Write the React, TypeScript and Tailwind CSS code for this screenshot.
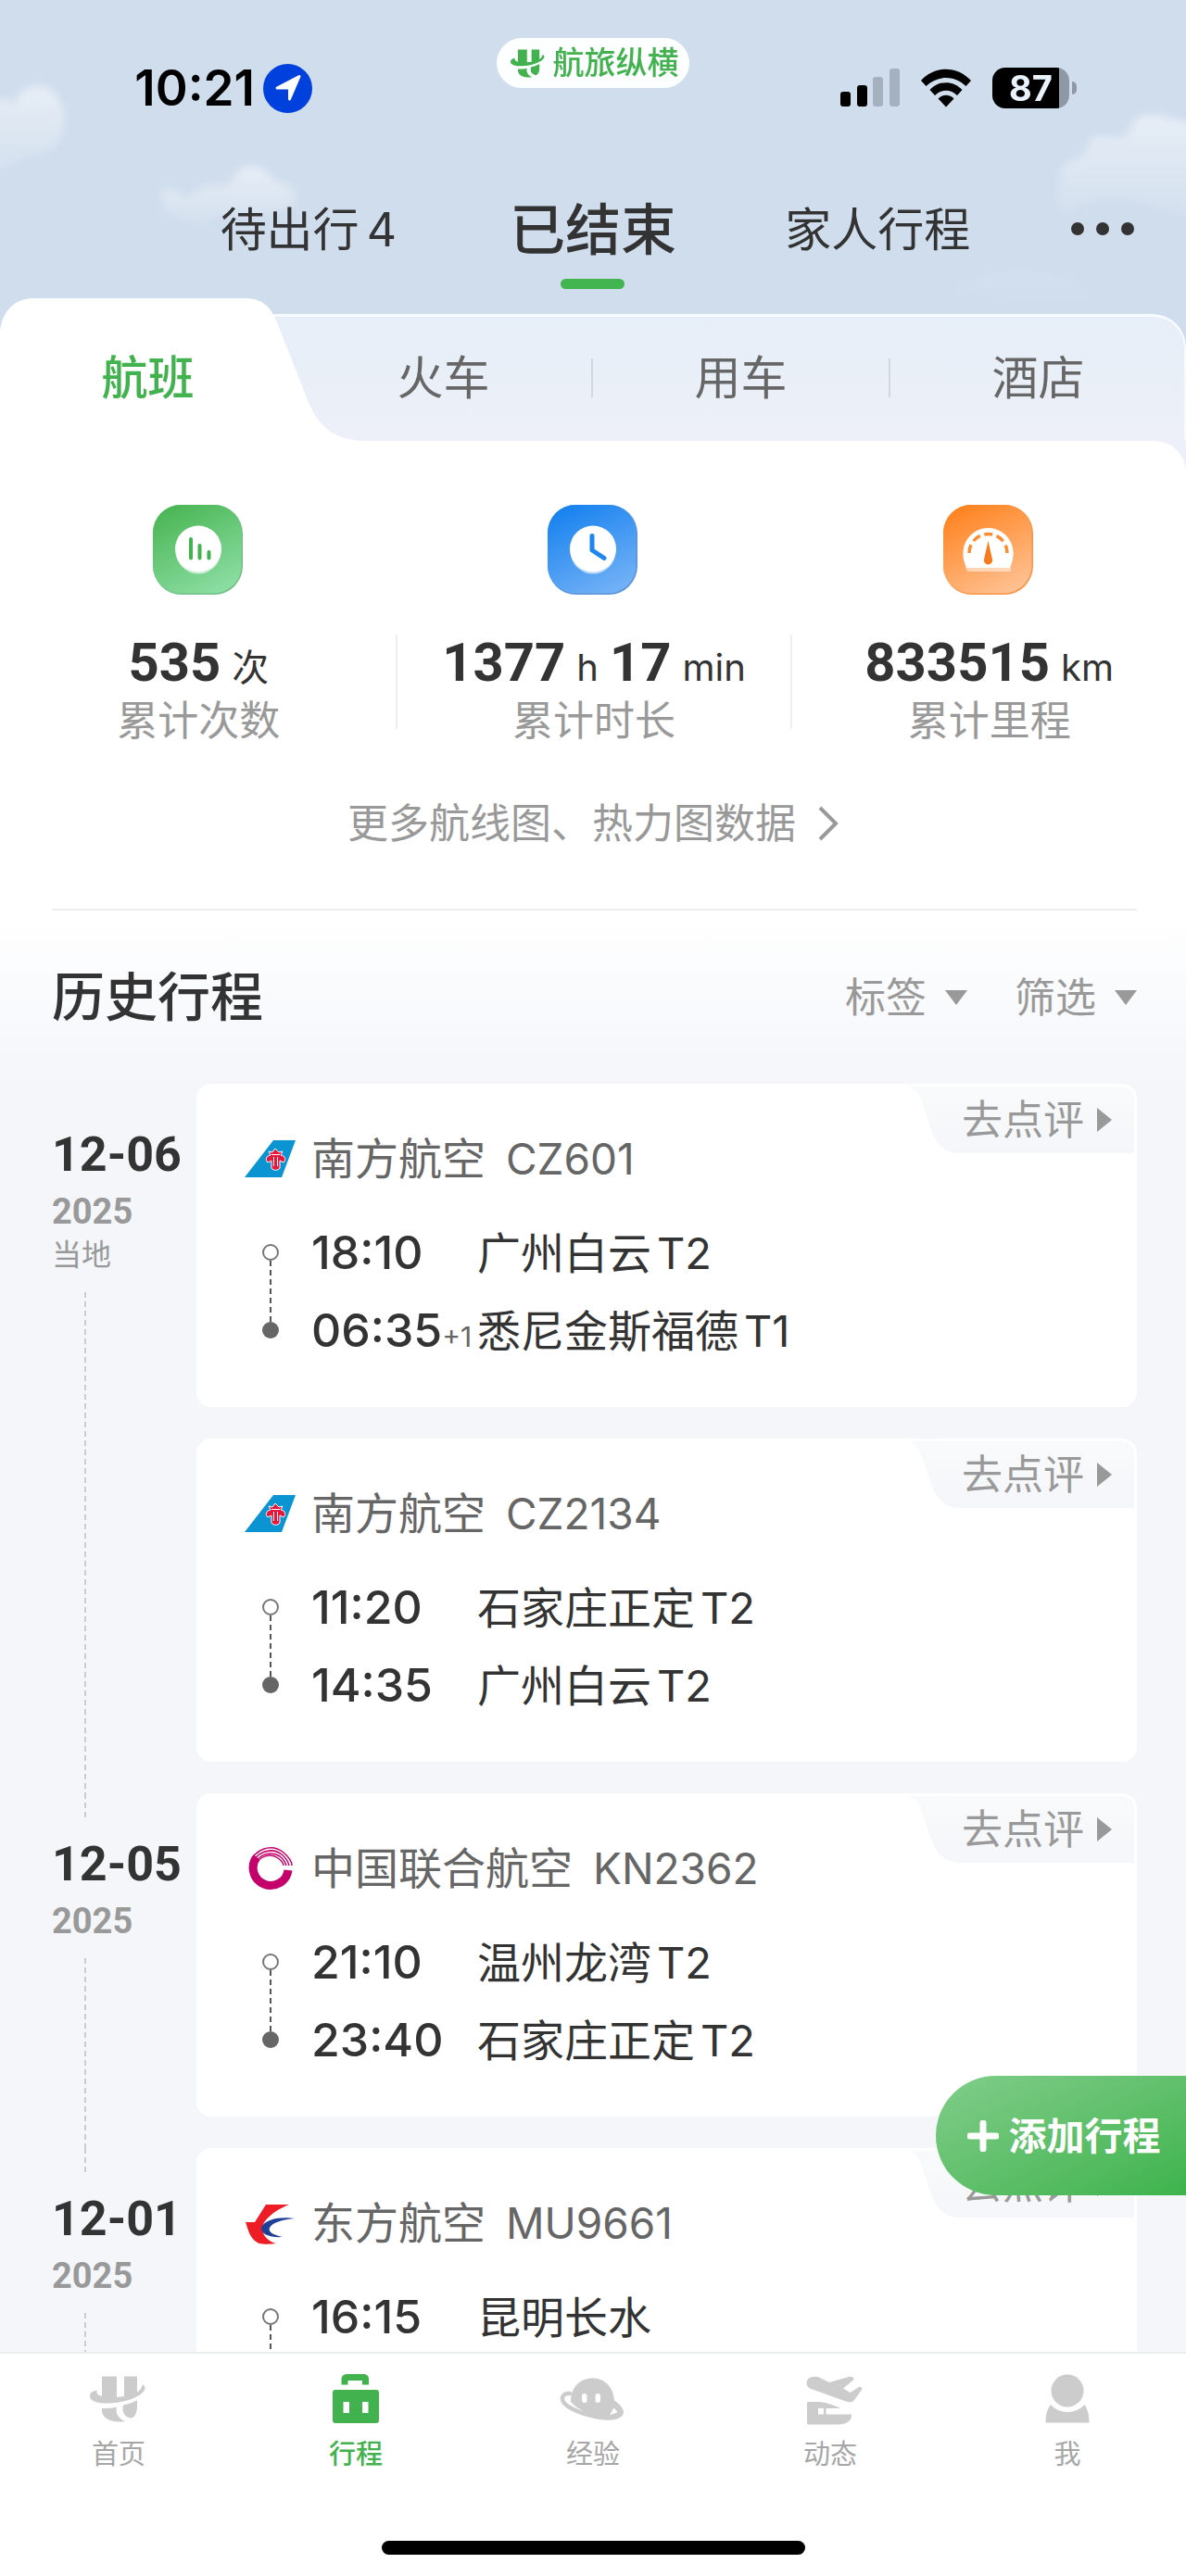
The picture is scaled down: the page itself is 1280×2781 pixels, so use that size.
import { Fragment } from 'react';
import type { ReactNode } from 'react';

type Airline = 'southern' | 'united' | 'eastern';

interface Stop {
  time: string;
  place: string;
  terminal?: string;
  /** Day offset shown after the arrival time, e.g. "+1". */
  dayOffset?: string;
}

interface Flight {
  airline: Airline;
  airlineName: string;
  flightNo: string;
  departure: Stop;
  arrival?: Stop;
}

interface DayGroup {
  date: string;
  year: string;
  note?: string;
  flights: Flight[];
}

const DAY_GROUPS: DayGroup[] = [
  {
    date: '12-06',
    year: '2025',
    note: '当地',
    flights: [
      {
        airline: 'southern',
        airlineName: '南方航空',
        flightNo: 'CZ601',
        departure: { time: '18:10', place: '广州白云', terminal: 'T2' },
        arrival: { time: '06:35', place: '悉尼金斯福德', terminal: 'T1', dayOffset: '+1' },
      },
      {
        airline: 'southern',
        airlineName: '南方航空',
        flightNo: 'CZ2134',
        departure: { time: '11:20', place: '石家庄正定', terminal: 'T2' },
        arrival: { time: '14:35', place: '广州白云', terminal: 'T2' },
      },
    ],
  },
  {
    date: '12-05',
    year: '2025',
    flights: [
      {
        airline: 'united',
        airlineName: '中国联合航空',
        flightNo: 'KN2362',
        departure: { time: '21:10', place: '温州龙湾', terminal: 'T2' },
        arrival: { time: '23:40', place: '石家庄正定', terminal: 'T2' },
      },
    ],
  },
  {
    date: '12-01',
    year: '2025',
    flights: [
      {
        airline: 'eastern',
        airlineName: '东方航空',
        flightNo: 'MU9661',
        departure: { time: '16:15', place: '昆明长水' },
      },
    ],
  },
];

const TRIP_TABS = [
  { label: '待出行', count: 4, active: false },
  { label: '已结束', active: true },
  { label: '家人行程', active: false },
];

const OTHER_MODES = ['火车', '用车', '酒店'];

/** Brand mark, used both in the status bar pill and in the bottom bar. */
function BrandMark({ className }: { className: string }): React.JSX.Element {
  return (
    <svg viewBox="0 0 72 60" fill="currentColor" className={className} aria-hidden="true">
      <path d="M18 5.5H34V28L42 27V5.5H56V22.5C59 20.5 61 18 61.5 14.5C66 16 66 21 58 26C48 32 34 35 20 34.5C10 34 5 31 5 27C5 23 8 21 13 20.5C11.5 23 13 26 18 27Z" />
      <path d="M18 40C24 40 30 39.5 34 38.5C32 45 36 51 43 54C30 56 19 52 18 43Z" />
      <path d="M41 36.5C47 35.5 52 33.5 56 31V38C56 45 53 50.5 49 50.5C43 49 39 45 41 36.5Z" />
    </svg>
  );
}

function Clouds(): React.JSX.Element {
  return (
    <svg
      viewBox="0 0 1280 480"
      preserveAspectRatio="xMidYMin slice"
      className="absolute inset-0 h-full w-full"
      aria-hidden="true"
    >
      <defs>
        <filter id="cloud-soft" x="-20%" y="-20%" width="140%" height="140%">
          <feGaussianBlur stdDeviation="4" />
        </filter>
        <linearGradient id="cloud-fade" x1="0" y1="0" x2="0" y2="1">
          <stop offset="0" stopColor="#fff" stopOpacity="0.5" />
          <stop offset="1" stopColor="#fff" stopOpacity="0.1" />
        </linearGradient>
      </defs>
      <g fill="url(#cloud-fade)" filter="url(#cloud-soft)">
        <path d="M-20 112C0 104 12 106 16 112C18 90 56 84 64 108C74 122 72 150 54 162C40 166 14 174 0 184L-20 190Z" />
        <path d="M174 214C170 204 190 198 198 212C210 212 214 200 230 200C246 204 252 194 256 186C268 172 290 180 296 196C312 196 324 208 318 222C290 236 252 230 232 234C220 246 206 246 200 236C186 236 176 226 174 214Z" />
        <path d="M1144 230C1136 208 1148 202 1142 188C1148 172 1166 172 1174 160C1174 140 1196 148 1206 148C1222 150 1218 130 1230 126C1250 118 1270 134 1300 132V232C1260 236 1240 214 1200 214C1170 214 1160 232 1144 230Z" />
        <path d="M1030 316C1070 280 1160 286 1190 330L1100 326Z" opacity="0.2" />
      </g>
    </svg>
  );
}

function StatusBar(): React.JSX.Element {
  return (
    <div className="relative grid h-[190px] grid-cols-[1fr_208px_1fr] items-center">
      <div className="flex items-center justify-end gap-[9px] pr-[199px]">
        <span className="text-[53px] leading-[60px] font-semibold text-black">10:21</span>
        <span className="flex size-[53px] items-center justify-center rounded-full bg-[#0040dd]">
          <svg viewBox="0 0 30 30" className="size-[30px]" aria-hidden="true">
            <path
              d="M27 2.5L16.500 27V15H3Z"
              fill="#fff"
              stroke="#fff"
              strokeWidth="3"
              strokeLinejoin="round"
            />
          </svg>
        </span>
      </div>

      <div className="mt-[41px] flex h-[54px] items-center justify-center gap-[5px] self-start rounded-full bg-[#fcfeff] text-[#42b24e]">
        <BrandMark className="h-[37px] w-[44px]" />
        <span className="text-[34px] leading-[40px] font-medium">航旅纵横</span>
      </div>

      <div className="flex items-center justify-end pr-[118px]">
        <svg viewBox="0 0 64 42" className="h-[42px] w-[64px]" aria-hidden="true">
          <rect x="0" y="25" width="11" height="16" rx="3" />
          <rect x="18" y="18" width="11" height="23" rx="3" />
          <rect x="35" y="9" width="11" height="32" rx="3" fill="#a6b1bf" />
          <rect x="53" y="0" width="11" height="41" rx="3" fill="#a6b1bf" />
        </svg>
        <svg viewBox="0 0 56 42" className="ml-[22px] h-[42px] w-[56px]" aria-hidden="true">
          <path d="M1 13C16 -3.500 40 -3.500 55 13L49.500 19C37 7 19 7 6.500 19Z" />
          <path d="M10.500 23C20 12.500 36 12.500 45.500 23L40 29C33 22 23 22 16 29Z" />
          <path d="M19.500 32.500C24 27.500 32 27.500 36.500 32.500L28 41.500Z" />
        </svg>
        <div className="ml-[22px] flex items-center gap-[3px]">
          <div className="flex h-[44px] w-[83px] items-center justify-center rounded-[14px] bg-[linear-gradient(to_right,#000_87%,#8f99a6_87%)] text-[38px] leading-[44px] font-bold text-[#e9f1fa]">
            87
          </div>
          <div className="h-[14px] w-[5px] rounded-r-full bg-[#8f99a6]" />
        </div>
      </div>
    </div>
  );
}

function TripTabs(): React.JSX.Element {
  return (
    <nav className="relative grid h-[132px] grid-cols-[14fr_24fr_24fr_24fr_14fr]">
      {TRIP_TABS.map((tab) => (
        <button
          key={tab.label}
          type="button"
          className="flex flex-col items-center pt-[22px] text-[#333] first:col-start-2"
        >
          {tab.active ? (
            <>
              <span className="text-[60px] leading-[72px] font-medium">{tab.label}</span>
              <span className="mt-[17px] h-[11px] w-[69px] rounded-full bg-[#42b550]" />
            </>
          ) : (
            <span className="flex gap-[8px] text-[50px] leading-[72px]">
              {tab.label}
              {tab.count && <span>{tab.count}</span>}
            </span>
          )}
        </button>
      ))}
      <button type="button" aria-label="更多" className="flex justify-center gap-[13px] pt-[50px]">
        <span className="size-[14px] rounded-full bg-[#333]" />
        <span className="size-[14px] rounded-full bg-[#333]" />
        <span className="size-[14px] rounded-full bg-[#333]" />
      </button>
    </nav>
  );
}

function ModeTabs(): React.JSX.Element {
  return (
    <nav className="relative h-[154px] pt-[17px] text-[50px] leading-[60px]">
      <div className="flex h-full rounded-t-[36px] border-t-3 border-r-2 border-[#f8fbfe] bg-gradient-to-b from-[#e6eef7] to-[#edf0f8]" />
      <svg
        viewBox="0 0 400 154"
        preserveAspectRatio="none"
        className="absolute top-0 left-0 h-full w-[31.25%]"
        aria-hidden="true"
      >
        <path
          d="M0 36C2 14 16 0 36 0H264C282 0 292 8 299 26L332 110C344 140 362 154 396 154H0Z"
          fill="#fff"
        />
      </svg>
      <div className="absolute inset-x-0 top-[17px] bottom-0 flex items-center">
        <button type="button" className="flex-1 font-medium text-[#42b24e]">
          航班
        </button>
        {OTHER_MODES.map((mode, index) => (
          <Fragment key={mode}>
            {index > 0 && <span className="h-[42px] w-[2px] bg-[#d3d7de]" />}
            <button type="button" className="flex-1 text-[#666]">
              {mode}
            </button>
          </Fragment>
        ))}
      </div>
    </nav>
  );
}

interface StatProps {
  icon: ReactNode;
  label: string;
  children: ReactNode;
}

function Stat({ icon, label, children }: StatProps): React.JSX.Element {
  return (
    <div className="group flex flex-col items-center">
      {icon}
      <div className="mt-[43px] h-[102px] w-full border-l-2 border-[#eee] group-first:border-transparent">
        <div className="flex h-[60px] items-baseline justify-center gap-[12px] text-[#333]">{children}</div>
        <div className="mt-[11px] text-center text-[44px] leading-[44px] text-[#999]">{label}</div>
      </div>
    </div>
  );
}

function Figure({ value, unit }: { value: string; unit: string }): React.JSX.Element {
  return (
    <>
      <span className="font-[Roboto] text-[58px] leading-[60px] font-bold">{value}</span>
      <span className="text-[40px] leading-[40px]">{unit}</span>
    </>
  );
}

function CountIcon(): React.JSX.Element {
  return (
    <svg viewBox="0 0 97 97" className="size-[97px]" aria-hidden="true">
      <defs>
        <linearGradient id="count-bg" x1="0.2" y1="0" x2="0.7" y2="1">
          <stop offset="0" stopColor="#4ab654" />
          <stop offset="1" stopColor="#8bdda2" />
        </linearGradient>
      </defs>
      <rect width="97" height="97" rx="31" fill="#6fc086" />
      <rect width="95.500" height="95.500" rx="30" fill="url(#count-bg)" />
      <circle cx="49" cy="50" r="24.500" fill="#fff" opacity="0.6" />
      <circle cx="49" cy="47.500" r="25" fill="#fff" />
      <path d="M41 37V57.500M50.500 44V57.500M60.500 51V57.500" stroke="#42b24e" strokeWidth="4" strokeLinecap="round" />
    </svg>
  );
}

function DurationIcon(): React.JSX.Element {
  return (
    <svg viewBox="0 0 97 97" className="size-[97px]" aria-hidden="true">
      <defs>
        <linearGradient id="duration-bg" x1="0.2" y1="0" x2="0.7" y2="1">
          <stop offset="0" stopColor="#1681ef" />
          <stop offset="1" stopColor="#72b1f6" />
        </linearGradient>
      </defs>
      <rect width="97" height="97" rx="31" fill="#5b93d8" />
      <rect width="95.500" height="95.500" rx="30" fill="url(#duration-bg)" />
      <circle cx="49" cy="50" r="24.500" fill="#fff" opacity="0.6" />
      <circle cx="49" cy="47.500" r="25" fill="#fff" />
      <path
        d="M48 33.500V49L61 57.500"
        fill="none"
        stroke="#1e86f0"
        strokeWidth="5"
        strokeLinecap="round"
        strokeLinejoin="round"
      />
    </svg>
  );
}

function MileageIcon(): React.JSX.Element {
  return (
    <svg viewBox="0 0 97 97" className="size-[97px]" aria-hidden="true">
      <defs>
        <linearGradient id="mileage-bg" x1="0.2" y1="0" x2="0.7" y2="1">
          <stop offset="0" stopColor="#ff821f" />
          <stop offset="1" stopColor="#ffc090" />
        </linearGradient>
      </defs>
      <rect width="97" height="97" rx="31" fill="#fb9344" />
      <rect width="95.500" height="95.500" rx="30" fill="url(#mileage-bg)" />
      <path d="M24 67H73V72H26Z" fill="#fff" opacity="0.5" />
      <path d="M25 68C14 44 30 25 48.500 25S83 44 72 68Z" fill="#fff" />
      <path
        d="M28 52A20.500 20.500 0 0 1 69 52"
        fill="none"
        stroke="#ff8b30"
        strokeWidth="3.500"
        strokeDasharray="9 5 9 4.700 9 4.700 9 5 9"
        strokeLinecap="butt"
      />
      <path d="M48.500 39L53 59A4.600 4.600 0 1 1 44 59Z" fill="#f97a1c" />
    </svg>
  );
}

function StatsPanel(): React.JSX.Element {
  return (
    <div className="bg-[#edf0f8]">
      <section className="rounded-tr-[34px] bg-white pt-[69px]">
        <div className="grid grid-cols-3">
          <Stat icon={<CountIcon />} label="累计次数">
            <Figure value="535" unit="次" />
          </Stat>
          <Stat icon={<DurationIcon />} label="累计时长">
            <Figure value="1377" unit="h" />
            <Figure value="17" unit="min" />
          </Stat>
          <Stat icon={<MileageIcon />} label="累计里程">
            <Figure value="833515" unit="km" />
          </Stat>
        </div>
        <a
          href="#stats"
          className="mx-auto mt-[72px] flex w-fit items-center gap-[24px] text-[44px] leading-[60px] text-[#999]"
        >
          更多航线图、热力图数据
          <svg viewBox="0 0 22 38" className="h-[38px] w-[22px]" aria-hidden="true">
            <path d="M2 2L19 19L2 36" fill="none" stroke="currentColor" strokeWidth="4" />
          </svg>
        </a>
        <hr className="mt-[62px] mr-[53px] ml-[56px] border-t-2 border-[#eee]" />
      </section>
    </div>
  );
}

function SelectTrigger({ label }: { label: string }): React.JSX.Element {
  return (
    <button type="button" className="flex items-center gap-[20px]">
      {label}
      <svg viewBox="0 0 24 16" fill="currentColor" className="h-[16px] w-[24px]" aria-hidden="true">
        <path d="M0 0H24L12 16Z" />
      </svg>
    </button>
  );
}

function AirlineLogo({ airline }: { airline: Airline }): React.JSX.Element {
  return (
    <svg viewBox="0 0 56 48" className="h-[48px] w-[56px]" aria-hidden="true">
      {airline === 'southern' && (
        <>
          <path d="M0 44L31 4H55L40 44Z" fill="#0a94d2" />
          <path
            d="M26 16L30 17L33 13L37 17L41 16L39 20C44 21 45 25 42 28L38 26V34C36 37 31 37 29 34V26L25 28C22 25 23 21 28 20Z"
            fill="#e5173c"
            stroke="#fff"
          />
          <path d="M31.500 22V32M35.500 22V32M29 19.500H38" stroke="#fff" strokeWidth="1" />
        </>
      )}
      {airline === 'united' && (
        <g fill="none" stroke="#c4006b">
          <path d="M47 26A19 19 0 1 1 13 12" strokeWidth="9" />
          <path d="M6 19C10 4 28 -4 42 7C48 12 51 17 51 21" strokeWidth="1.500" />
          <path d="M7 22C11 7 28 0 40 9C45 13 47 17 48 21" strokeWidth="1.500" />
          <path d="M9 24C12 10 27 4 38 11C43 15 44 18 45 21" strokeWidth="1.500" />
          <path d="M12 20C16 11 28 7 36 13C40 16 42 19 42 21" strokeWidth="1.500" />
        </g>
      )}
      {airline === 'eastern' && (
        <>
          <path
            d="M23 4H48C38 8 28 14 22 22C16 30 20 42 34 46C28 47 20 47 16 46C10 44 6 38 4 32L1 23H11Z"
            fill="#ee1c25"
          />
          <path d="M54 19C40 17 22 19 18 29C17 36 28 40 41 39C32 37 25 34 27 29C30 23 42 20 54 19Z" fill="#1f3f98" />
        </>
      )}
    </svg>
  );
}

function StopRow({ stop }: { stop?: Stop }): React.JSX.Element {
  return (
    <div className="grid h-[84px] grid-cols-[179px_1fr] items-baseline text-[#333]">
      {stop && (
        <>
          <div className="flex items-baseline whitespace-nowrap">
            <span className="text-[50px] leading-[84px] font-medium">{stop.time}</span>
            {stop.dayOffset && <span className="text-[30px] leading-[40px] text-[#666]">{stop.dayOffset}</span>}
          </div>
          <div className="flex gap-[6px] text-[47px] leading-[84px]">
            {stop.place}
            {stop.terminal && <span>{stop.terminal}</span>}
          </div>
        </>
      )}
    </div>
  );
}

function FlightCard({ flight }: { flight: Flight }): React.JSX.Element {
  return (
    <article className="relative rounded-[16px] bg-white px-[52px] pt-[56px] pb-[41px]">
      <div className="flex items-center gap-[16px] text-[47px] leading-[50px] text-[#666]">
        <AirlineLogo airline={flight.airline} />
        <span>{flight.airlineName}</span>
        <span className="ml-[6px] text-[46px]">{flight.flightNo}</span>
      </div>
      <div className="mt-[34px] flex items-center gap-[16px]">
        <div className="flex h-[102px] w-[56px] flex-col items-center">
          <span className="size-[18px] rounded-full border-2 border-[#777]" />
          <span className="w-[2px] flex-1 bg-[repeating-linear-gradient(to_bottom,#555_0_6px,transparent_6px_10px)]" />
          <span className="size-[18px] rounded-full bg-[#666]" />
        </div>
        <div className="flex-1">
          <StopRow stop={flight.departure} />
          <StopRow stop={flight.arrival} />
        </div>
      </div>
      <button
        type="button"
        className="absolute top-[3px] right-[3px] flex h-[72px] w-[244px] items-center justify-end gap-[14px] pr-[24px] text-[44px] leading-[60px] text-[#999]"
      >
        <svg viewBox="0 0 244 72" className="absolute inset-0 h-full w-full" aria-hidden="true">
          <defs>
            <linearGradient id="review-bg" x1="0" y1="0" x2="0" y2="1">
              <stop offset="0" stopColor="#f9fafb" />
              <stop offset="1" stopColor="#f4f6f9" />
            </linearGradient>
          </defs>
          <path d="M0 0H230C239 0 244 6 244 14V72H56C40 72 30 62 24 44L14 14C11 6 6 2 0 0Z" fill="url(#review-bg)" />
        </svg>
        <span className="relative">去点评</span>
        <svg viewBox="0 0 16 26" fill="currentColor" className="relative h-[26px] w-[16px]" aria-hidden="true">
          <path d="M0 0L16 13L0 26Z" />
        </svg>
      </button>
    </article>
  );
}

function TimelineDash({ className }: { className: string }): React.JSX.Element {
  return (
    <div
      className={`ml-[35px] w-[2px] bg-[repeating-linear-gradient(to_bottom,#ccc_0_6px,transparent_6px_10px)] ${className}`}
    />
  );
}

function DaySection({ group, first }: { group: DayGroup; first: boolean }): React.JSX.Element {
  return (
    <section className="flex">
      <div className="flex w-[156px] shrink-0 flex-col">
        <TimelineDash className={first ? 'invisible h-[26px]' : 'h-[26px]'} />
        <div className="mt-[21px] font-[Roboto] text-[52px] leading-[60px] font-bold text-[#333]">{group.date}</div>
        <div className="mt-[11px] font-[Roboto] text-[38px] leading-[40px] font-bold text-[#999]">{group.year}</div>
        {group.note && <div className="mt-[7px] text-[32px] leading-[40px] text-[#999]">{group.note}</div>}
        <TimelineDash className="mt-[20px] flex-1" />
      </div>
      <div className="flex flex-1 flex-col gap-[34px] pb-[34px]">
        {group.flights.map((flight) => (
          <FlightCard key={flight.flightNo} flight={flight} />
        ))}
      </div>
    </section>
  );
}

function History(): React.JSX.Element {
  return (
    <section className="bg-[linear-gradient(to_bottom,#fff,#f4f6fa_187px)] pr-[53px] pl-[56px]">
      <div className="flex h-[187px] items-center justify-between">
        <h2 className="text-[57px] leading-[64px] font-medium text-[#333]">历史行程</h2>
        <div className="flex gap-[51px] text-[44px] leading-[60px] text-[#999]">
          <SelectTrigger label="标签" />
          <SelectTrigger label="筛选" />
        </div>
      </div>
      {DAY_GROUPS.map((group, index) => (
        <DaySection key={group.date} group={group} first={index === 0} />
      ))}
    </section>
  );
}

const NAV_ITEMS: { label: string; active?: boolean; icon: ReactNode }[] = [
  { label: '首页', icon: <BrandMark className="h-[60px] w-[72px]" /> },
  {
    label: '行程',
    active: true,
    icon: (
      <svg viewBox="0 0 72 60" fill="currentColor" className="h-[60px] w-[72px]" aria-hidden="true">
        <path d="M20.500 14.500V9C20.500 5 23 3 27 3H44C48 3 50 5 50 9V14.500H43V10H27.500V14.500Z" />
        <path
          fillRule="evenodd"
          d="M14 20H58C60 20 61 21 61 23V53C61 55 60 56 58 56H14C12 56 11 55 11 53V23C11 21 12 20 14 20ZM22.500 33V45H29V33ZM43 33V45H49.500V33Z"
        />
      </svg>
    ),
  },
  {
    label: '经验',
    icon: (
      <svg viewBox="0 0 72 60" className="h-[60px] w-[72px]" aria-hidden="true">
        <path
          d="M12 33C12 17 22 7.500 35.500 7.500S58.500 18 59 32C67 38 70 44 66 48C61 52 54 51 49 50C34 48 20 42 12 33Z"
          fill="currentColor"
        />
        <path
          d="M11 24C2 23 -1 32 10 38.500C22 46 46 52 58 50C70 48 69 42 59 34"
          fill="none"
          stroke="currentColor"
          strokeWidth="4.500"
          strokeLinecap="round"
        />
        <path d="M58.500 40L62 44L55 46.500Z" fill="#fff" stroke="#fff" strokeLinejoin="round" />
        <rect x="24" y="24" width="5.500" height="10" rx="2.700" fill="#fff" />
        <rect x="38.500" y="24" width="5.500" height="10" rx="2.700" fill="#fff" />
      </svg>
    ),
  },
  {
    label: '动态',
    icon: (
      <svg viewBox="0 0 72 60" fill="currentColor" className="h-[60px] w-[72px]" aria-hidden="true">
        <path d="M15 6.500C19 5 23 5.500 26 7.500L35 12L56 6C59 5 62 7 61.500 9L50 18.500L57.500 23L67 17C69 16 71 18 70 20L62 31C60 33.500 57 34 53 32.500L14 18.500C9 16 9.500 8 15 6.500Z" />
        <path
          fillRule="evenodd"
          d="M13 33H25C33 34 41 37 47 40H23V46.500H59C59.500 54 53 57.500 44 57.500H13C11.500 57.500 11 57 11 55.500V35C11 33.500 11.500 33 13 33Z"
        />
        <path d="M29 39H31.500V47H29Z" />
      </svg>
    ),
  },
  {
    label: '我',
    icon: (
      <svg viewBox="0 0 72 60" fill="currentColor" className="h-[60px] w-[72px]" aria-hidden="true">
        <circle cx="36" cy="21" r="17.500" />
        <path d="M12.500 55.500C12.500 47 14 41 18 36C27 46.500 45 46.500 54.500 36C58 41 59.500 47 59.500 55.500Z" />
      </svg>
    ),
  },
];

function BottomBar(): React.JSX.Element {
  return (
    <footer className="border-t-2 border-[#ebeeee] bg-white pt-[19px]">
      <nav className="grid grid-cols-5">
        {NAV_ITEMS.map((item) => (
          <a
            key={item.label}
            href={`#${item.label}`}
            aria-current={item.active ? 'page' : undefined}
            className={item.active ? 'flex flex-col items-center text-[#42b24e]' : 'flex flex-col items-center text-[#ccc]'}
          >
            {item.icon}
            <span
              className={
                item.active ? 'mt-[10px] text-[29px] leading-[40px] font-medium' : 'mt-[10px] text-[29px] leading-[40px] text-[#a6a6a6]'
              }
            >
              {item.label}
            </span>
          </a>
        ))}
      </nav>
      <div className="mx-auto mt-[73px] mb-[23px] h-[15px] w-[457px] rounded-full bg-black" />
    </footer>
  );
}

export default function App(): React.JSX.Element {
  return (
    <div className="flex h-screen flex-col bg-[#f4f6fa] font-[Inter,'Noto_Sans_CJK_SC',sans-serif]">
      <main className="relative min-h-0 flex-1 overflow-hidden">
        <header className="relative bg-[#cfdded]">
          <Clouds />
          <StatusBar />
          <TripTabs />
          <ModeTabs />
        </header>
        <StatsPanel />
        <History />
        <button
          type="button"
          className="absolute right-0 bottom-[169px] flex h-[129px] w-[270px] items-center justify-center gap-[11px] rounded-l-full bg-gradient-to-br from-[#80cd8a] to-[#3cb34c] pl-[6px] text-[41px] leading-[60px] font-bold text-white"
        >
          <svg viewBox="0 0 34 34" className="size-[34px]" aria-hidden="true">
            <path d="M17 3V31M3 17H31" stroke="currentColor" strokeWidth="7" strokeLinecap="round" />
          </svg>
          添加行程
        </button>
      </main>
      <BottomBar />
    </div>
  );
}
